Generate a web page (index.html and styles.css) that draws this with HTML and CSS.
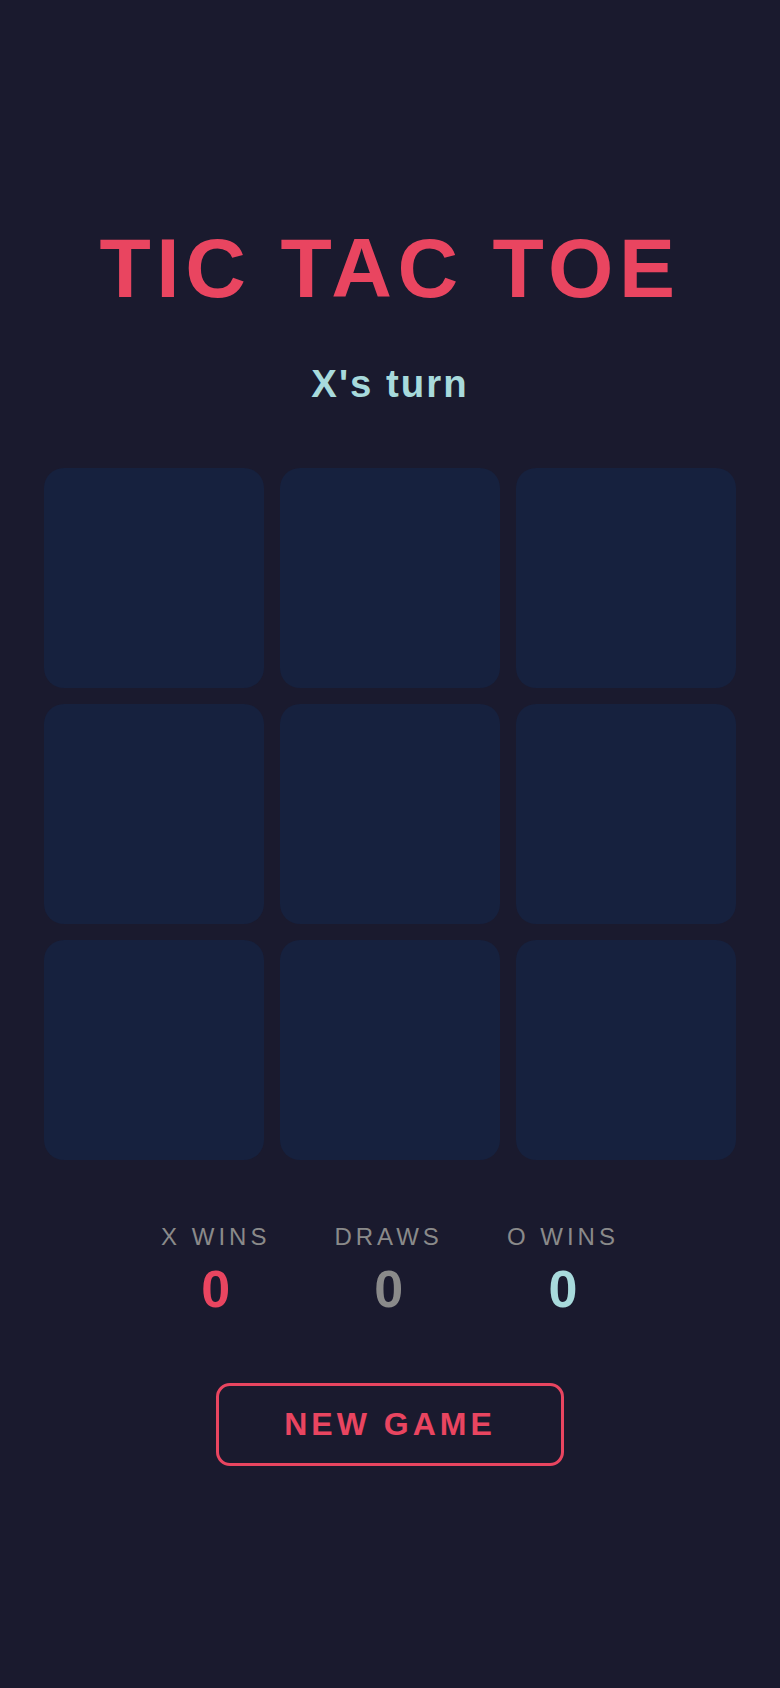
FILE: index.html
```html
<!DOCTYPE html>
<html lang="en">
<head>
    <meta charset="UTF-8">
    <title>Tic Tac Toe</title>
    <link rel="stylesheet" href="styles.css">
</head>
<body>
    <main class="game">
        <h1 class="title">TIC TAC TOE</h1>
        <div id="status" class="status">X's turn</div>
        <div id="board" class="board">
            <button class="cell" data-i="0"></button>
            <button class="cell" data-i="1"></button>
            <button class="cell" data-i="2"></button>
            <button class="cell" data-i="3"></button>
            <button class="cell" data-i="4"></button>
            <button class="cell" data-i="5"></button>
            <button class="cell" data-i="6"></button>
            <button class="cell" data-i="7"></button>
            <button class="cell" data-i="8"></button>
        </div>
        <div class="scores">
            <div class="score">
                <div class="score-label">X WINS</div>
                <div id="xWins" class="score-value x">0</div>
            </div>
            <div class="score">
                <div class="score-label">DRAWS</div>
                <div id="draws" class="score-value draw">0</div>
            </div>
            <div class="score">
                <div class="score-label">O WINS</div>
                <div id="oWins" class="score-value o">0</div>
            </div>
        </div>
        <button id="newGame" class="new-game">NEW GAME</button>
    </main>
    <script>
        const lines = [[0,1,2],[3,4,5],[6,7,8],[0,3,6],[1,4,7],[2,5,8],[0,4,8],[2,4,6]];
        const cells = document.querySelectorAll('.cell');
        const status = document.getElementById('status');
        const score = { X: 0, O: 0, draw: 0 };
        let board = Array(9).fill('');
        let turn = 'X';
        let over = false;

        cells.forEach(cell => {
            cell.addEventListener('click', () => {
                const i = +cell.dataset.i;
                if (over || board[i]) return;
                board[i] = turn;
                cell.textContent = turn;
                cell.classList.add(turn === 'X' ? 'x' : 'o');
                const win = lines.find(l => l.every(k => board[k] === turn));
                if (win) {
                    over = true;
                    score[turn]++;
                    status.textContent = turn + ' wins!';
                } else if (board.every(v => v)) {
                    over = true;
                    score.draw++;
                    status.textContent = "It's a draw";
                } else {
                    turn = turn === 'X' ? 'O' : 'X';
                    status.textContent = turn + "'s turn";
                }
                document.getElementById('xWins').textContent = score.X;
                document.getElementById('oWins').textContent = score.O;
                document.getElementById('draws').textContent = score.draw;
            });
        });

        document.getElementById('newGame').addEventListener('click', () => {
            board = Array(9).fill('');
            turn = 'X';
            over = false;
            status.textContent = "X's turn";
            cells.forEach(c => { c.textContent = ''; c.className = 'cell'; });
        });
    </script>
</body>
</html>
```

FILE: styles.css
```css
body { margin: 0; background: #1a1a2e; font-family: "Liberation Sans", Arial, sans-serif; color: #e0e0e0; }
.game { box-sizing: border-box; min-height: 100vh; padding-top: 4px; display: flex; flex-direction: column; align-items: center; justify-content: center; }
.title { margin: 0 0 55px; font-size: 84px; line-height: 1; font-weight: bold; letter-spacing: 5.6px; color: #e94560; }
.status { margin-bottom: 65px; font-size: 38.4px; line-height: 1; font-weight: bold; letter-spacing: 2px; color: #a8dadc; }
.board { display: grid; grid-template-columns: repeat(3, 220px); grid-auto-rows: 220px; gap: 16px; margin-bottom: 65px; }
.cell { border: none; border-radius: 20px; background: #16213e; font-family: inherit; font-size: 120px; font-weight: bold; cursor: pointer; padding: 0; }
.cell.x { color: #e94560; }
.cell.o { color: #a8dadc; }
.scores { display: flex; gap: 64px; margin-bottom: 68px; }
.score { display: flex; flex-direction: column; align-items: center; gap: 14px; }
.score-label { font-size: 24px; line-height: 1; letter-spacing: 4px; color: #8a8a8a; }
.score-value { font-size: 52px; line-height: 1; font-weight: bold; }
.score-value.x { color: #e94560; }
.score-value.draw { color: #8a8a8a; }
.score-value.o { color: #a8dadc; }
.new-game { padding: 20px 65px; background: transparent; border: 3px solid #e94560; border-radius: 14px; color: #e94560; font-family: inherit; font-size: 32px; font-weight: bold; letter-spacing: 4px; cursor: pointer; }
```
